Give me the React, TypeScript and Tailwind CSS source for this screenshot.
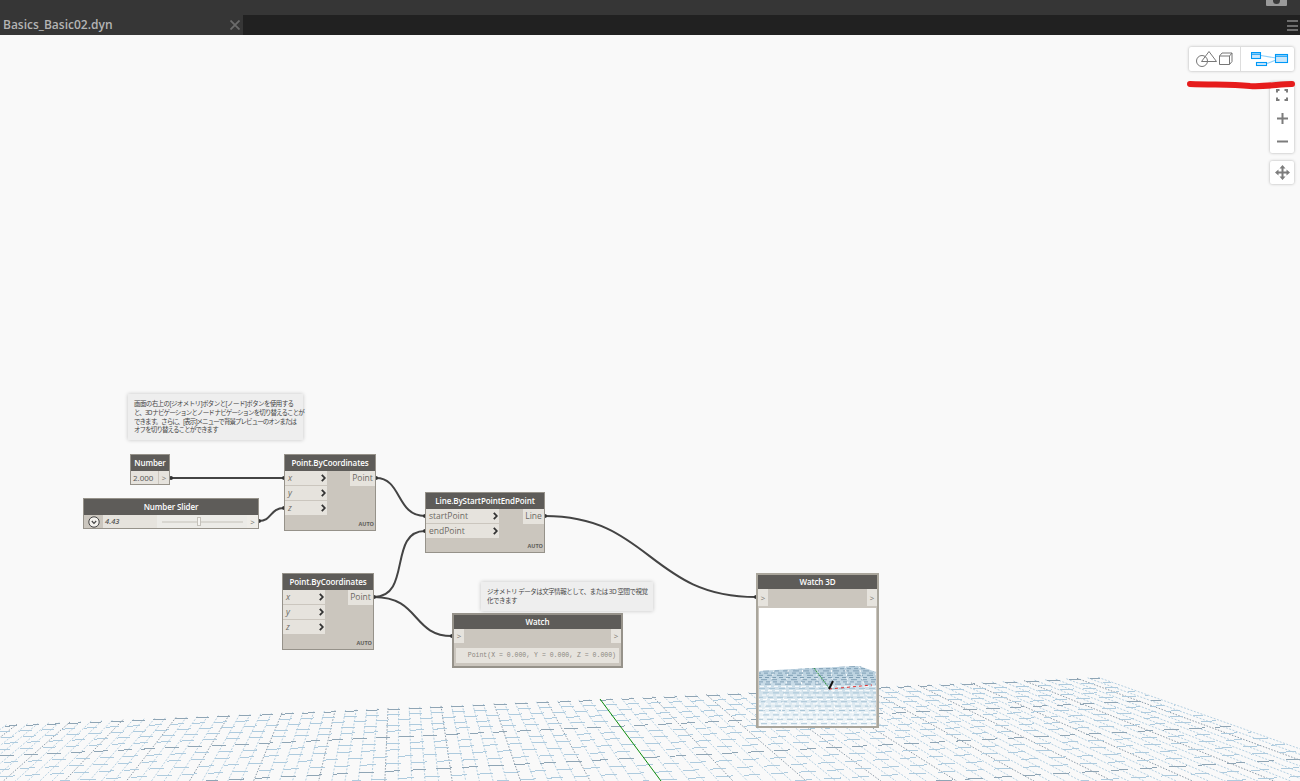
import type { ReactNode } from 'react'

const SANS = "font-['Open_Sans','Noto_Sans_CJK_JP',sans-serif]"

// grid floor: two vanishing points read off the reference
const VP_DEPTH = { x: 400, y: 430 }
const VP_ROW_X = 6800
const COL_STEP = 10.6
const topEdgeY = (x: number) => 430 + (269 * (VP_ROW_X - x)) / (VP_ROW_X - 600)

function buildRows() {
  const rows: { x2: number; y1: number; y2: number; dark: boolean; dash: string; offset: number }[] = []
  for (let k = 0; k < 60; k++) {
    const yAt600 = 430 + 1 / (0.0037 - k * 0.000067)
    if (yAt600 > 830) break
    const at = (x: number) => 430 + ((yAt600 - 430) * (VP_ROW_X - x)) / (VP_ROW_X - 600)
    let x2 = 1090
    for (let i = 0; i < 6; i++) x2 = 400 + (at(x2) - 430) * 2.816
    // dashes sit between depth lines, so they stack along the slant
    const scale = (yAt600 - 430) / 269
    const period = COL_STEP * 2 * scale
    const start = VP_DEPTH.x + 200 * scale + (k % 3 === 2 ? period / 2 : 0)
    rows.push({
      x2,
      y1: at(0),
      y2: at(x2),
      dark: k % 5 === 0,
      dash: `${(period * 0.6).toFixed(1)} ${(period * 0.4).toFixed(1)}`,
      offset: period - (start % period),
    })
  }
  return rows
}

function buildCols() {
  const cols: { x1: number; y1: number; x2: number; y2: number; dark: boolean; green: boolean }[] = []
  for (let j = -60; j <= 47; j++) {
    const x1 = 600 + j * COL_STEP
    const y1 = topEdgeY(x1)
    const t = (800 - VP_DEPTH.y) / (y1 - VP_DEPTH.y)
    cols.push({
      x1,
      y1,
      x2: VP_DEPTH.x + (x1 - VP_DEPTH.x) * t,
      y2: 800,
      dark: j % 5 === 0,
      green: j === 0,
    })
  }
  return cols
}

function GridFloor() {
  const rows = buildRows()
  const cols = buildCols()
  return (
    <svg className="absolute left-0 top-0" width={1300} height={746} viewBox="0 35 1300 746">
      {cols.map((c, i) =>
        c.green ? null : (
          <line
            key={i}
            x1={c.x1}
            y1={c.y1}
            x2={c.x2}
            y2={c.y2}
            stroke={c.dark ? '#8a9aa8' : '#b5d0e2'}
            strokeWidth={1}
            strokeDasharray={c.dark ? '1.5 1.5' : '2 1.5'}
          />
        ),
      )}
      {rows.map((r, i) => (
        <line
          key={i}
          x1={0}
          y1={r.y1}
          x2={r.x2}
          y2={r.y2}
          stroke={r.dark ? '#8fa5b5' : '#aecbde'}
          strokeWidth={1}
          strokeDasharray={r.dash}
          strokeDashoffset={r.offset}
          shapeRendering="crispEdges"
        />
      ))}
      <line x1={600} y1={699} x2={661} y2={781} stroke="#0a8a0a" strokeWidth={1} />
    </svg>
  )
}

function MiniGrid() {
  const rows = Array.from({ length: 28 }, (_, k) => 58 + k * 2.2)
  return (
    <svg className="absolute left-0 top-0" width={117} height={118} viewBox="0 0 117 118">
      <defs>
        <linearGradient id="floor" x1="0" y1="0" x2="0" y2="1">
          <stop offset="0" stopColor="#b3ccdc" />
          <stop offset="0.5" stopColor="#d5e4ed" />
          <stop offset="1" stopColor="#f4f8fa" />
        </linearGradient>
        <clipPath id="floorClip">
          <polygon points="0,63 55,60 100,58 117,64 117,118 0,118" />
        </clipPath>
      </defs>
      <g clipPath="url(#floorClip)">
        <rect x={0} y={56} width={117} height={62} fill="url(#floor)" />
        {rows.map((y, k) => (
          <line
            key={k}
            x1={0}
            y1={y + 0.5}
            x2={117}
            y2={y + 0.5}
            stroke={k < 9 ? '#7f9fb5' : k % 2 ? '#ffffff' : '#a9c6d8'}
            strokeWidth={1}
            strokeDasharray={k % 2 ? '4 3' : '6 4'}
            strokeDashoffset={k * 3}
          />
        ))}
        {Array.from({ length: 9 }, (_, j) => (
          <line key={j} x1={j * 14 + 2} y1={58} x2={j * 19 - 18} y2={118} stroke="#ffffff" strokeWidth={1} strokeDasharray="2 2" />
        ))}
      </g>
      <line x1={55} y1={60} x2={70} y2={80} stroke="#2f9a3a" strokeWidth={1} strokeDasharray="2 1" />
      <line x1={70} y1={81} x2={113} y2={77} stroke="#e03030" strokeWidth={1} strokeDasharray="3 3" />
      <line x1={70} y1={81} x2={74} y2={73} stroke="#111111" strokeWidth={2} />
    </svg>
  )
}

function Wires() {
  const ends = [
    [171, 478],
    [284, 478],
    [259, 521],
    [284, 508],
    [376, 478],
    [425, 516],
    [374, 597],
    [425, 531],
    [452, 636],
    [545, 516],
    [756, 597],
  ]
  return (
    <svg className="absolute left-0 top-0 z-10" width={1300} height={746} viewBox="0 35 1300 746" fill="none">
      <g stroke="#444444" strokeWidth={2}>
        <path d="M171 478 L284 478" />
        <path d="M259 521 C272 521 270 508 284 508" />
        <path d="M376 478 C402 478 396 516 425 516" />
        <path d="M374 597 C412 597 388 531 425 531" />
        <path d="M374 597 C420 597 412 636 452 636" />
        <path d="M545 516 C650 516 650 597 756 597" />
      </g>
      {ends.map(([x, y], i) => (
        <circle key={i} cx={x} cy={y} r={2} fill="#333333" />
      ))}
    </svg>
  )
}

function Node({ title, className, thick, children }: { title: string; className: string; thick?: boolean; children: ReactNode }) {
  return (
    <div className={`absolute z-20 flex flex-col border-[#96928a] bg-[#cbc6be] ${thick ? 'border-2' : 'border'} ${SANS} ${className}`}>
      <div
        className={`flex shrink-0 items-center justify-center bg-[#5e5c59] text-[8px] font-semibold tracking-[-0.1px] text-white ${thick ? 'h-[14px]' : 'h-[16px]'}`}
      >
        {title}
      </div>
      {children}
    </div>
  )
}

function Chevron() {
  return (
    <svg width={5} height={8} viewBox="0 0 5 8" fill="none" stroke="#333333" strokeWidth={1.8}>
      <path d="M0.8 0.8 L3.8 4 L0.8 7.2" />
    </svg>
  )
}

function Port({ label, italic = true }: { label: string; italic?: boolean }) {
  return (
    <div className={`flex h-[14px] items-center justify-between bg-[#e6e3dd] pl-[3px] pr-[1px] text-[8.5px] text-[#6d6a64] ${italic ? 'italic' : ''}`}>
      <span>{label}</span>
      <Chevron />
    </div>
  )
}

function OutPort() {
  return <div className="flex w-[10px] items-center justify-center bg-[#e6e3dd] text-[8px] text-[#77746d]">&gt;</div>
}

function PointNode({ className, output }: { className: string; output: string }) {
  return (
    <Node title="Point.ByCoordinates" className={className}>
      <div className="flex flex-1 justify-between">
        <div className="flex w-[42px] flex-col gap-[1px]">
          <Port label="x" />
          <Port label="y" />
          <Port label="z" />
        </div>
        <div className="flex h-[15px] w-[25px] items-center justify-center bg-[#e6e3dd] text-[8.5px] text-[#6d6a64]">
          {output}
        </div>
      </div>
      <Auto />
    </Node>
  )
}

function Auto() {
  return <div className="pb-[2px] pr-[1px] text-right text-[5.5px] font-bold leading-[8px] text-[#5e5c59]">AUTO</div>
}

function GeometryIcon() {
  return (
    <svg width={38} height={16} viewBox="0 0 38 16" fill="none" stroke="#777777" strokeWidth={1}>
      <circle cx={7} cy={10} r={5.5} />
      <path d="M14 0.5 L21.5 10.5 L6.5 10.5 Z" />
      <path d="M24.5 5 H34.5 V13.5 H24.5 Z M24.5 5 L27 2 H37 V10.5 L34.5 13.5 M34.5 5 L37 2" />
    </svg>
  )
}

function NodesIcon() {
  return (
    <svg width={38} height={15} viewBox="0 0 38 15" fill="none" stroke="#0099f7" strokeWidth={1.1}>
      <path d="M10 3.5 L25 6 M16 11.5 L25 8" stroke="#8fd0fa" />
      <rect x={0.5} y={0.5} width={9} height={6} fill="#cbe7fb" />
      <path d="M0.5 2.2 H9.5" />
      <rect x={5.5} y={10.5} width={10} height={3} fill="#cbe7fb" />
      <rect x={24.5} y={2.5} width={12} height={8} fill="#cbe7fb" />
      <path d="M24.5 4.2 H36.5" />
    </svg>
  )
}

function MoveIcon() {
  return (
    <svg width={15} height={15} viewBox="0 0 15 15" fill="#7c7c7c" stroke="#7c7c7c">
      <path d="M7.5 2 V13 M2 7.5 H13" strokeWidth={2} fill="none" />
      <path d="M7.5 0 L10.5 3.5 H4.5 Z M7.5 15 L10.5 11.5 H4.5 Z M0 7.5 L3.5 4.5 V10.5 Z M15 7.5 L11.5 4.5 V10.5 Z" strokeWidth={0} />
    </svg>
  )
}

export default function App() {
  return (
    <div className={`flex h-[781px] w-[1300px] flex-col overflow-hidden bg-[#f9f9f9] ${SANS}`}>
      <div className="relative flex h-[15px] shrink-0 justify-end overflow-hidden bg-[#363636]">
        <svg className="mr-[12px]" width={22} height={7} viewBox="0 0 22 7">
          <rect x={0} y={-4} width={21} height={10} rx={1} fill="#9a9a9a" />
          <circle cx={10.5} cy={0.5} r={3.5} fill="#3a3a3a" />
        </svg>
      </div>

      <div className="flex h-[20px] shrink-0 bg-[#212121]">
        <div className="flex w-[243px] items-center justify-between bg-[#363636] pl-[3px] pr-[3px]">
          <span className="text-[12px] font-semibold text-[#b4b4b4]">Basics_Basic02.dyn</span>
          <svg width={10} height={10} viewBox="0 0 10 10" stroke="#6b6b6b" strokeWidth={1.8}>
            <path d="M0.5 0.5 L9.5 9.5 M9.5 0.5 L0.5 9.5" />
          </svg>
        </div>
        <div className="flex flex-1 justify-end pr-[2px]">
          <div className="mt-[5px] flex h-[11px] w-[11px] flex-col justify-between">
            <div className="h-[2px] bg-[#6e6e6e]" />
            <div className="h-[2px] bg-[#6e6e6e]" />
            <div className="h-[2px] bg-[#6e6e6e]" />
          </div>
        </div>
      </div>

      <div className="relative flex-1 overflow-hidden bg-[#f9f9f9]">
        <GridFloor />
        <Wires />

        <div className="absolute left-[128px] top-[359px] z-20 h-[46px] w-[175px] whitespace-nowrap bg-[#eeeeee] pl-[6px] pt-[6px] text-[6.5px] leading-[8.8px] text-[#444444] shadow-[0_0_4px_rgba(0,0,0,0.22)]">
          <div className="tracking-[-0.6px]">画面の右上の[ジオメトリ]ボタンと[ノード]ボタンを使用する</div>
          <div className="tracking-[-0.9px]">と、3D ナビゲーションとノード ナビゲーションを切り替えることが</div>
          <div className="tracking-[-0.95px]">できます。さらに、[表示]メニューで背景プレビューのオンまたは</div>
          <div className="tracking-[-0.9px]">オフを切り替えることができます</div>
        </div>

        <Node title="Number" className="left-[130px] top-[419px] h-[31px] w-[40px]">
          <div className="flex h-[13px] gap-[1px]">
            <div className="flex w-[27px] items-center bg-[#e6e3dd] pl-[2px] text-[8px] text-[#555555]">2.000</div>
            <div className="flex flex-1 items-center justify-center bg-[#e6e3dd] text-[8px] text-[#77746d]">&gt;</div>
          </div>
        </Node>

        <Node title="Number Slider" className="left-[83px] top-[463px] h-[31px] w-[176px]">
          <div className="flex h-[14px] items-center">
            <div className="flex w-[19px] justify-center">
              <svg width={12} height={12} viewBox="0 0 12 12" fill="#f4f2ee" stroke="#444444">
                <circle cx={6} cy={6} r={5.2} />
                <path d="M3.8 5 L6 7.4 L8.2 5" fill="none" strokeWidth={1.2} />
              </svg>
            </div>
            <div className="flex h-full w-[54px] items-center bg-[#e6e3dd] pl-[2px] text-[7.5px] font-semibold italic text-[#555555]">
              4.43
            </div>
            <div className="flex h-full flex-1 items-center bg-[#ecebe7] pl-[5px] pr-[4px]">
              <div className="relative h-[2px] w-full bg-[#d8d6d0]">
                <div className="absolute left-[35px] top-[-4px] h-[9px] w-[4px] border border-[#c4c1ba] bg-[#f6f5f2]" />
              </div>
            </div>
            <div className="flex h-full w-[11px] items-center justify-center bg-[#efede8] text-[8px] text-[#77746d]">&gt;</div>
          </div>
        </Node>

        <PointNode className="left-[284px] top-[419px] h-[77px] w-[92px]" output="Point" />
        <PointNode className="left-[282px] top-[538px] h-[77px] w-[92px]" output="Point" />

        <Node title="Line.ByStartPointEndPoint" className="left-[425px] top-[457px] h-[61px] w-[120px]">
          <div className="flex flex-1 justify-between">
            <div className="flex w-[73px] flex-col gap-[1px]">
              <Port label="startPoint" italic={false} />
              <Port label="endPoint" italic={false} />
            </div>
            <div className="flex h-[15px] w-[21px] items-center justify-center bg-[#e6e3dd] text-[8.5px] text-[#6d6a64]">
              Line
            </div>
          </div>
          <Auto />
        </Node>

        <div className="absolute left-[481px] top-[547px] z-20 h-[29px] w-[172px] whitespace-nowrap bg-[#eeeeee] pl-[6px] pt-[5px] text-[6.5px] leading-[9px] tracking-[-0.5px] text-[#444444] shadow-[0_0_4px_rgba(0,0,0,0.22)]">
          <div>ジオメトリ データは文字情報として、または 3D 空間で視覚</div>
          <div>化できます</div>
        </div>

        <Node title="Watch" thick className="left-[452px] top-[578px] h-[55px] w-[171px]">
          <div className="flex h-[14px] justify-between">
            <OutPort />
            <OutPort />
          </div>
          <div className="mx-[2px] mt-[5px] flex h-[15px] items-center justify-end whitespace-nowrap bg-[#e6e3dd] pr-[3px] font-['Liberation_Mono',monospace] text-[6.5px] text-[#8a8780]">
            Point(X = 0.000, Y = 0.000, Z = 0.000)
          </div>
        </Node>

        <Node title="Watch 3D" thick className="left-[756px] top-[538px] h-[155px] w-[123px] border-[#aaa69c]">
          <div className="flex h-[17px] shrink-0 justify-between">
            <OutPort />
            <OutPort />
          </div>
          <div className="relative mx-auto mt-[2px] h-[118px] w-[117px] overflow-hidden bg-white">
            <MiniGrid />
          </div>
        </Node>

        <div className="absolute left-[1189px] top-[12px] z-30 flex h-[24px] w-[105px] rounded-[2px] bg-white shadow-[0_0_3px_rgba(0,0,0,0.3)]">
          <div className="flex w-[52px] items-center justify-center border-r border-[#dddddd] pr-[1px]">
            <GeometryIcon />
          </div>
          <div className="flex flex-1 items-center justify-center pl-[4px] pt-[1px]">
            <NodesIcon />
          </div>
        </div>

        <div className="absolute left-[1270px] top-[47px] z-30 flex h-[71px] w-[24px] flex-col items-center rounded-[2px] bg-white shadow-[0_0_3px_rgba(0,0,0,0.3)]">
          <svg className="mt-[7px]" width={12} height={12} viewBox="0 0 12 12" fill="none" stroke="#7c7c7c" strokeWidth={2}>
            <path d="M1 3.5 V1 H3.5 M8.5 1 H11 V3.5 M1 8.5 V11 H3.5 M8.5 11 H11 V8.5" />
          </svg>
          <svg className="mt-[12px]" width={11} height={11} viewBox="0 0 11 11" stroke="#7c7c7c" strokeWidth={2}>
            <path d="M5.5 0 V11 M0 5.5 H11" />
          </svg>
          <svg className="mt-[12px]" width={11} height={11} viewBox="0 0 11 11" stroke="#7c7c7c" strokeWidth={2}>
            <path d="M0 5.5 H11" />
          </svg>
        </div>

        <div className="absolute left-[1270px] top-[126px] z-30 flex h-[23px] w-[24px] items-center justify-center rounded-[2px] bg-white shadow-[0_0_3px_rgba(0,0,0,0.3)]">
          <MoveIcon />
        </div>

        <svg className="absolute left-[1185px] top-[44px] z-40" width={112} height={12} viewBox="0 0 112 12" fill="none">
          <path d="M5 5 C30 6 45 5 65 7 C80 8 95 5 107 5" stroke="#e61c1c" strokeWidth={6} strokeLinecap="round" />
        </svg>
      </div>
    </div>
  )
}
